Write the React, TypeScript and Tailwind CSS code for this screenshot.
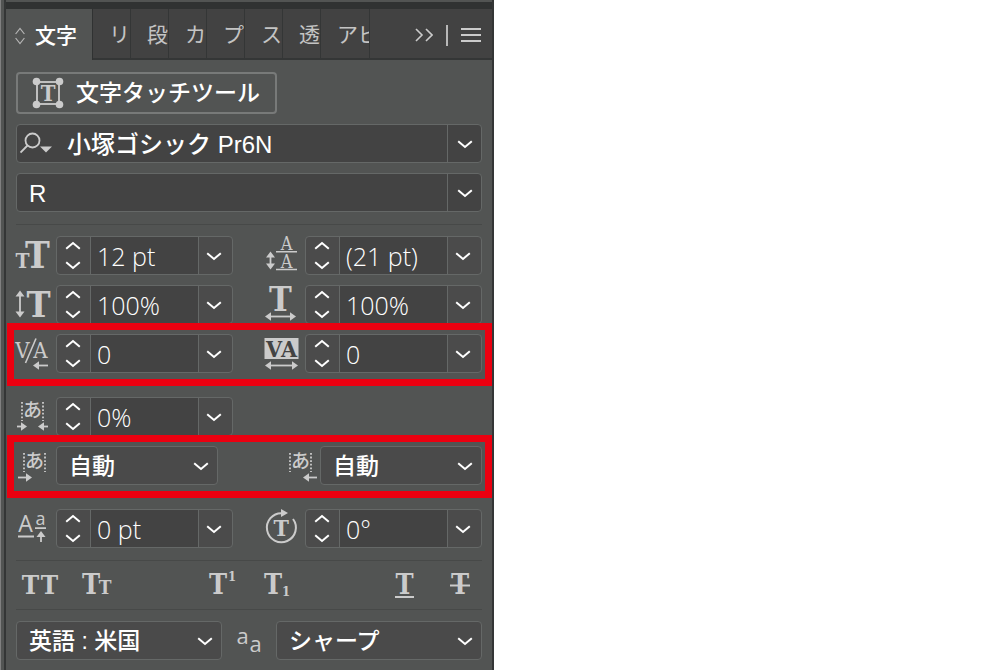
import { useState, type ReactNode } from 'react';

const UI_FONT = "font-['Liberation_Sans','Noto_Sans_CJK_JP',sans-serif]";
const SLAB = "font-['DejaVu_Serif_Condensed','DejaVu_Serif',serif]";
const KANA = "font-['Noto_Sans_CJK_JP',sans-serif]";

function Chevron({ up = false }: { up?: boolean }) {
  return (
    <svg width="16" height="10" viewBox="0 0 16 10" fill="none" stroke="#fff" strokeWidth="2" aria-hidden="true">
      <path d={up ? 'M1.2 7.8 L8 2 L14.8 7.8' : 'M1.2 2.2 L8 8 L14.8 2.2'} />
    </svg>
  );
}

function Icon({ children }: { children: ReactNode }) {
  return (
    <svg
      viewBox="0 0 40 40"
      className="h-10 w-10 shrink-0 overflow-visible"
      fill="none"
      stroke="#cbcbcb"
      strokeWidth="1.6"
      aria-hidden="true"
    >
      {children}
    </svg>
  );
}

type GlyphProps = {
  x: number;
  y: number;
  size: number;
  children: string;
  thin?: boolean;
  fill?: string;
};

function Glyph({ x, y, size, children, thin = false, fill = '#cbcbcb' }: GlyphProps) {
  return (
    <text
      x={x}
      y={y}
      fontSize={size}
      fill={fill}
      stroke="none"
      textAnchor="middle"
      className={`${SLAB} ${thin ? 'font-normal' : 'font-bold'}`}
    >
      {children}
    </text>
  );
}

function Arrow({ from, to, y, head = 'right' }: { from: number; to: number; y: number; head?: 'left' | 'right' | 'both' }) {
  return (
    <g>
      <path d={`M${head === 'right' ? from : from + 4} ${y} H${head === 'left' ? to : to - 4}`} strokeWidth="1.8" />
      {head !== 'left' && <path d={`M${to} ${y} l-6 -4.2 v8.4z`} fill="#cbcbcb" stroke="none" />}
      {head !== 'right' && <path d={`M${from} ${y} l6 -4.2 v8.4z`} fill="#cbcbcb" stroke="none" />}
    </g>
  );
}

function VerticalArrow({ x, from, to }: { x: number; from: number; to: number }) {
  return (
    <g>
      <path d={`M${x} ${from + 4} V${to - 4}`} strokeWidth="1.8" />
      <path d={`M${x} ${from} l-4.5 6 h9z M${x} ${to} l-4.5 -6 h9z`} fill="#cbcbcb" stroke="none" />
    </g>
  );
}

// Kana between two dotted guides, used by the tsume and aki rows
function KanaBox({ x, y }: { x: number; y: number }) {
  return (
    <g>
      <path d={`M${x} ${y} v19 M${x + 21} ${y} v19`} strokeDasharray="1.8 1.8" strokeWidth="1.8" />
      <text
        x={x + 10.5}
        y={y + 15}
        fontSize="19"
        fill="#cbcbcb"
        stroke="none"
        textAnchor="middle"
        className={`${KANA} font-medium`}
      >
        あ
      </text>
    </g>
  );
}

function StepperField({ id, label, value, icon }: { id: string; label: string; value: string; icon: ReactNode }) {
  const [text, setText] = useState(value);

  return (
    <div className="flex min-w-0 items-center">
      <label htmlFor={id} className="h-[39px] shrink-0">
        {icon}
      </label>
      <div className="flex h-[39px] min-w-0 flex-1 rounded border border-[#656867] bg-[#4b4b4b]">
        <div className="flex w-[33px] shrink-0 flex-col justify-between py-1 pr-px">
          <button type="button" aria-label={`${label} +`} className="flex justify-center">
            <Chevron up />
          </button>
          <button type="button" aria-label={`${label} -`} className="flex justify-center">
            <Chevron />
          </button>
        </div>
        <input
          id={id}
          aria-label={label}
          value={text}
          onChange={(e) => setText(e.target.value)}
          className="min-w-0 flex-1 border-x border-[#656867] bg-[#434343] pt-[2px] pl-[6px] font-['Open_Sans',sans-serif] text-[25px] font-[350] text-white outline-none"
        />
        <button type="button" aria-label={`${label} list`} className="flex w-[33px] shrink-0 items-center justify-center pr-[3px]">
          <Chevron />
        </button>
      </div>
    </div>
  );
}

function SelectField({ id, label, options, className }: { id: string; label: string; options: string[]; className: string }) {
  return (
    <div className={`relative h-[39px] ${className}`}>
      <select
        id={id}
        aria-label={label}
        className="h-full w-full appearance-none rounded border border-[#656867] bg-[#4a4a4a] pt-[2px] pl-3 text-[23px] font-medium text-white outline-none"
      >
        {options.map((option) => (
          <option key={option}>{option}</option>
        ))}
      </select>
      <span className="pointer-events-none absolute inset-y-0 right-0 flex w-[34px] items-center justify-center">
        <Chevron />
      </span>
    </div>
  );
}

function FontField({ label, value, search = false }: { label: string; value: string; search?: boolean }) {
  return (
    <div className="flex h-[39px] rounded border border-[#656867] bg-[#434343]">
      {search && (
        <button type="button" aria-label="フォントを検索" className="flex w-[38px] shrink-0 items-center pl-[3px]">
          <svg width="32" height="24" viewBox="0 0 32 24" fill="none" stroke="#cbcbcb" strokeWidth="1.8">
            <circle cx="12.5" cy="8.5" r="7" />
            <path d="M7.5 13.5 L0.5 20.5" />
            <path d="M20 14.5 h12 l-6 6z" fill="#cbcbcb" stroke="none" />
          </svg>
        </button>
      )}
      <input
        aria-label={label}
        defaultValue={value}
        className="min-w-0 flex-1 bg-transparent pt-[2px] pl-3 text-2xl font-medium text-white outline-none"
      />
      <button
        type="button"
        aria-label={`${label} list`}
        className="flex w-[34px] shrink-0 items-center justify-center border-l border-[#656867]"
      >
        <Chevron />
      </button>
    </div>
  );
}

function Highlight({ children }: { children: ReactNode }) {
  return (
    <div className="relative">
      {children}
      <div className="pointer-events-none absolute -top-[11px] -right-[10px] -bottom-[13px] -left-[9px] border-[7px] border-[#eb0010]" />
    </div>
  );
}

function StyleButton({ label, children }: { label: string; children: ReactNode }) {
  return (
    <button type="button" aria-label={label} className="flex w-12 justify-center">
      <Icon>{children}</Icon>
    </button>
  );
}

const tabs = ['リ', '段', 'カ', 'プ', 'ス', '透'];

function TabBar() {
  return (
    <div className="flex h-[51px] bg-[#424242] text-[21px] text-[#c4c4c4]">
      <button type="button" className="flex w-[87px] shrink-0 items-center border-r border-[#303232] bg-[#525453] pt-[2px] pl-[9px] font-medium text-white">
        <svg width="10" height="18" viewBox="0 0 10 18" fill="none" stroke="#b5b5b5" strokeWidth="1.2" className="mr-[10px]">
          <path d="M0.6 7 L5 1.5 L9.4 7 M0.6 11 L5 16.5 L9.4 11" />
        </svg>
        文字
      </button>
      <div className="flex min-w-0 flex-1 border-b-2 border-[#343636]">
        {tabs.map((tab) => (
          <button
            key={tab}
            type="button"
            className="w-[38px] shrink-0 overflow-hidden border-r border-[#343636] pt-[3px] pl-4 text-left whitespace-nowrap"
          >
            {tab}
          </button>
        ))}
        <button
          type="button"
          className="w-[49px] shrink-0 overflow-hidden border-r border-[#343636] pt-[3px] pl-4 text-left whitespace-nowrap"
        >
          アピ
        </button>
        <div className="flex flex-1 items-center justify-end gap-[13px] pt-[3px] pr-[11px]">
          <button type="button" aria-label="パネルを折りたたむ">
            <svg width="18" height="14" viewBox="0 0 18 14" fill="none" stroke="#cbcbcb" strokeWidth="1.6">
              <path d="M1 1 L7 7 L1 13 M11 1 L17 7 L11 13" />
            </svg>
          </button>
          <span className="h-[21px] w-[2px] bg-[#b8b8b8]" />
          <button type="button" aria-label="パネルメニュー">
            <svg width="20" height="16" viewBox="0 0 20 16" stroke="#cbcbcb" strokeWidth="2">
              <path d="M0 2 H20 M0 8 H20 M0 14 H20" />
            </svg>
          </button>
        </div>
      </div>
    </div>
  );
}

export default function App() {
  return (
    <div className={`min-h-screen bg-white ${UI_FONT}`}>
      <div className="flex min-h-screen w-full max-w-[494px] bg-[#525453]">
        <div className="w-1 shrink-0 border-l border-[#808080]" />
        <main className="min-w-0 flex-1 border-x-2 border-[#343636]">
          <div className="h-[9px] border-t-2 border-[#525453] bg-[#303232]" />
          <TabBar />

          <div className="px-[10px] pt-3 pb-[10px]">
            <div className="flex flex-col gap-[10px]">
              <button
                type="button"
                className="flex h-[42px] items-center self-start rounded border-2 border-[#787a79] pr-[15px] pl-[14px] text-[23px] font-medium text-white"
              >
                <svg width="32" height="32" viewBox="0 0 32 32" fill="none" stroke="#cbcbcb" strokeWidth="1.8" className="mr-3">
                  <rect x="5" y="5" width="22" height="22" />
                  <g fill="#cbcbcb" stroke="none">
                    <circle cx="4.5" cy="4.5" r="3.8" />
                    <circle cx="27.5" cy="4.5" r="3.8" />
                    <circle cx="4.5" cy="27.5" r="3.8" />
                    <circle cx="27.5" cy="27.5" r="3.8" />
                  </g>
                  <Glyph x={16} y={24} size={22}>T</Glyph>
                </svg>
                文字タッチツール
              </button>
              <FontField label="フォント" value="小塚ゴシック Pr6N" search />
              <FontField label="スタイル" value="R" />
            </div>

            <div className="mt-3 flex flex-col gap-6 border-t border-[#474948] pt-[11px]">
              <div className="flex flex-col gap-[10px]">
                <div className="grid grid-cols-2 gap-x-8">
                  <StepperField
                    id="size"
                    label="フォントサイズ"
                    value="12 pt"
                    icon={
                      <Icon>
                        <Glyph x={6.5} y={32} size={21}>T</Glyph>
                        <Glyph x={21.5} y={32} size={37}>T</Glyph>
                      </Icon>
                    }
                  />
                  <StepperField
                    id="leading"
                    label="行送り"
                    value="(21 pt)"
                    icon={
                      <Icon>
                        <Glyph x={21.5} y={14} size={18} thin>A</Glyph>
                        <Glyph x={21.5} y={32} size={18} thin>A</Glyph>
                        <path d="M11 15.7 H32 M11 33.5 H32" />
                        <VerticalArrow x={5.5} from={15.5} to={33.5} />
                      </Icon>
                    }
                  />
                </div>
                <div className="grid grid-cols-2 gap-x-8">
                  <StepperField
                    id="vscale"
                    label="垂直比率"
                    value="100%"
                    icon={
                      <Icon>
                        <VerticalArrow x={4} from={5.5} to={32.5} />
                        <Glyph x={22.5} y={32} size={36}>T</Glyph>
                      </Icon>
                    }
                  />
                  <StepperField
                    id="hscale"
                    label="水平比率"
                    value="100%"
                    icon={
                      <Icon>
                        <Glyph x={15.5} y={26} size={34}>T</Glyph>
                        <Arrow from={0} to={31} y={31.5} head="both" />
                      </Icon>
                    }
                  />
                </div>
                <Highlight>
                  <div className="grid grid-cols-2 gap-x-8">
                    <StepperField
                      id="kerning"
                      label="カーニング"
                      value="0"
                      icon={
                        <Icon>
                          <Glyph x={6.5} y={24} size={22} thin>V</Glyph>
                          <Glyph x={24.5} y={24} size={22} thin>A</Glyph>
                          <path d="M9.5 29 L20 4.5" />
                          <Arrow from={17} to={32} y={31.5} head="left" />
                        </Icon>
                      }
                    />
                    <StepperField
                      id="tracking"
                      label="トラッキング"
                      value="0"
                      icon={
                        <Icon>
                          <rect x="-0.5" y="4" width="34" height="21" fill="#cbcbcb" stroke="none" />
                          <Glyph x={9} y={23} size={23} fill="#434343">V</Glyph>
                          <Glyph x={24} y={23} size={23} fill="#434343">A</Glyph>
                          <Arrow from={0} to={33} y={31.5} head="both" />
                        </Icon>
                      }
                    />
                  </div>
                </Highlight>
              </div>

              <div className="flex flex-col gap-[10px]">
                <div className="grid grid-cols-2 gap-x-8">
                  <StepperField
                    id="tsume"
                    label="文字ツメ"
                    value="0%"
                    icon={
                      <Icon>
                        <KanaBox x={6} y={5} />
                        <Arrow from={1} to={11} y={29.5} />
                        <Arrow from={22} to={32} y={29.5} head="left" />
                      </Icon>
                    }
                  />
                </div>
                <Highlight>
                  <div className="flex justify-between">
                    <div className="flex">
                      <label htmlFor="aki-before" className="h-[39px]">
                        <Icon>
                          <KanaBox x={8} y={7} />
                          <Arrow from={2} to={16} y={31.5} />
                        </Icon>
                      </label>
                      <SelectField id="aki-before" label="アキを挿入（左）" options={['自動']} className="w-[162px]" />
                    </div>
                    <div className="flex">
                      <label htmlFor="aki-after" className="h-[39px]">
                        <Icon>
                          <KanaBox x={10} y={7} />
                          <Arrow from={23} to={37} y={31.5} head="left" />
                        </Icon>
                      </label>
                      <SelectField id="aki-after" label="アキを挿入（右）" options={['自動']} className="w-[162px]" />
                    </div>
                  </div>
                </Highlight>
              </div>

              <div className="grid grid-cols-2 gap-x-8">
                <StepperField
                  id="baseline"
                  label="ベースラインシフト"
                  value="0 pt"
                  icon={
                    <Icon>
                      <text x="9.5" y="23" fontSize="23" fill="#cbcbcb" stroke="none" textAnchor="middle" className="font-['Open_Sans',sans-serif]">
                        A
                      </text>
                      <text x="24.5" y="16" fontSize="18" fill="#cbcbcb" stroke="none" textAnchor="middle" className="font-['Open_Sans',sans-serif]">
                        a
                      </text>
                      <path d="M2 27.5 H18 M19 19.2 H30 M25 26 V33" strokeWidth="1.8" />
                      <path d="M25 22 l-4.5 6 h9z" fill="#cbcbcb" stroke="none" />
                    </Icon>
                  }
                />
                <StepperField
                  id="rotation"
                  label="文字回転"
                  value="0°"
                  icon={
                    <Icon>
                      <path d="M28 10 A14.5 14.5 0 1 1 17 4.2" strokeWidth="2" />
                      <path d="M16 0 L23 4 L16 8z" fill="#cbcbcb" stroke="none" />
                      <Glyph x={16.3} y={27} size={23}>T</Glyph>
                    </Icon>
                  }
                />
              </div>
            </div>

            <div className="mt-3 flex h-[49px] items-center justify-between border-t border-[#474948]">
              <div className="flex gap-2">
                <StyleButton label="オールキャップス">
                  <Glyph x={10.5} y={29} size={26}>T</Glyph>
                  <Glyph x={29.5} y={29} size={26}>T</Glyph>
                </StyleButton>
                <StyleButton label="スモールキャップス">
                  <Glyph x={15} y={29} size={27}>T</Glyph>
                  <Glyph x={29} y={29} size={19}>T</Glyph>
                </StyleButton>
              </div>
              <div className="flex gap-2">
                <StyleButton label="上付き文字">
                  <Glyph x={17} y={29} size={27}>T</Glyph>
                  <Glyph x={31} y={16} size={13}>1</Glyph>
                </StyleButton>
                <StyleButton label="下付き文字">
                  <Glyph x={16} y={29} size={27}>T</Glyph>
                  <Glyph x={29} y={31} size={13}>1</Glyph>
                </StyleButton>
              </div>
              <div className="flex gap-2">
                <StyleButton label="下線">
                  <Glyph x={22.5} y={29} size={27}>T</Glyph>
                  <path d="M13 32 H32" strokeWidth="2" />
                </StyleButton>
                <StyleButton label="打ち消し線">
                  <Glyph x={22} y={29} size={27}>T</Glyph>
                  <path d="M12 20.5 H32" strokeWidth="2" />
                </StyleButton>
              </div>
            </div>

            <div className="flex items-center border-t border-[#474948] pt-[11px]">
              <SelectField id="language" label="言語" options={['英語 : 米国']} className="min-w-0 flex-1" />
              <label htmlFor="antialias" className="flex h-[39px] w-[54px] justify-center">
                <Icon>
                  <g fill="#cbcbcb" stroke="none" textAnchor="middle" fontSize="22" className="font-['Open_Sans',sans-serif]">
                    <text x="13.5" y="23">a</text>
                    <text x="26.5" y="31">a</text>
                  </g>
                </Icon>
              </label>
              <SelectField id="antialias" label="アンチエイリアス" options={['シャープ']} className="min-w-0 flex-1" />
            </div>
          </div>
        </main>
      </div>
    </div>
  );
}
